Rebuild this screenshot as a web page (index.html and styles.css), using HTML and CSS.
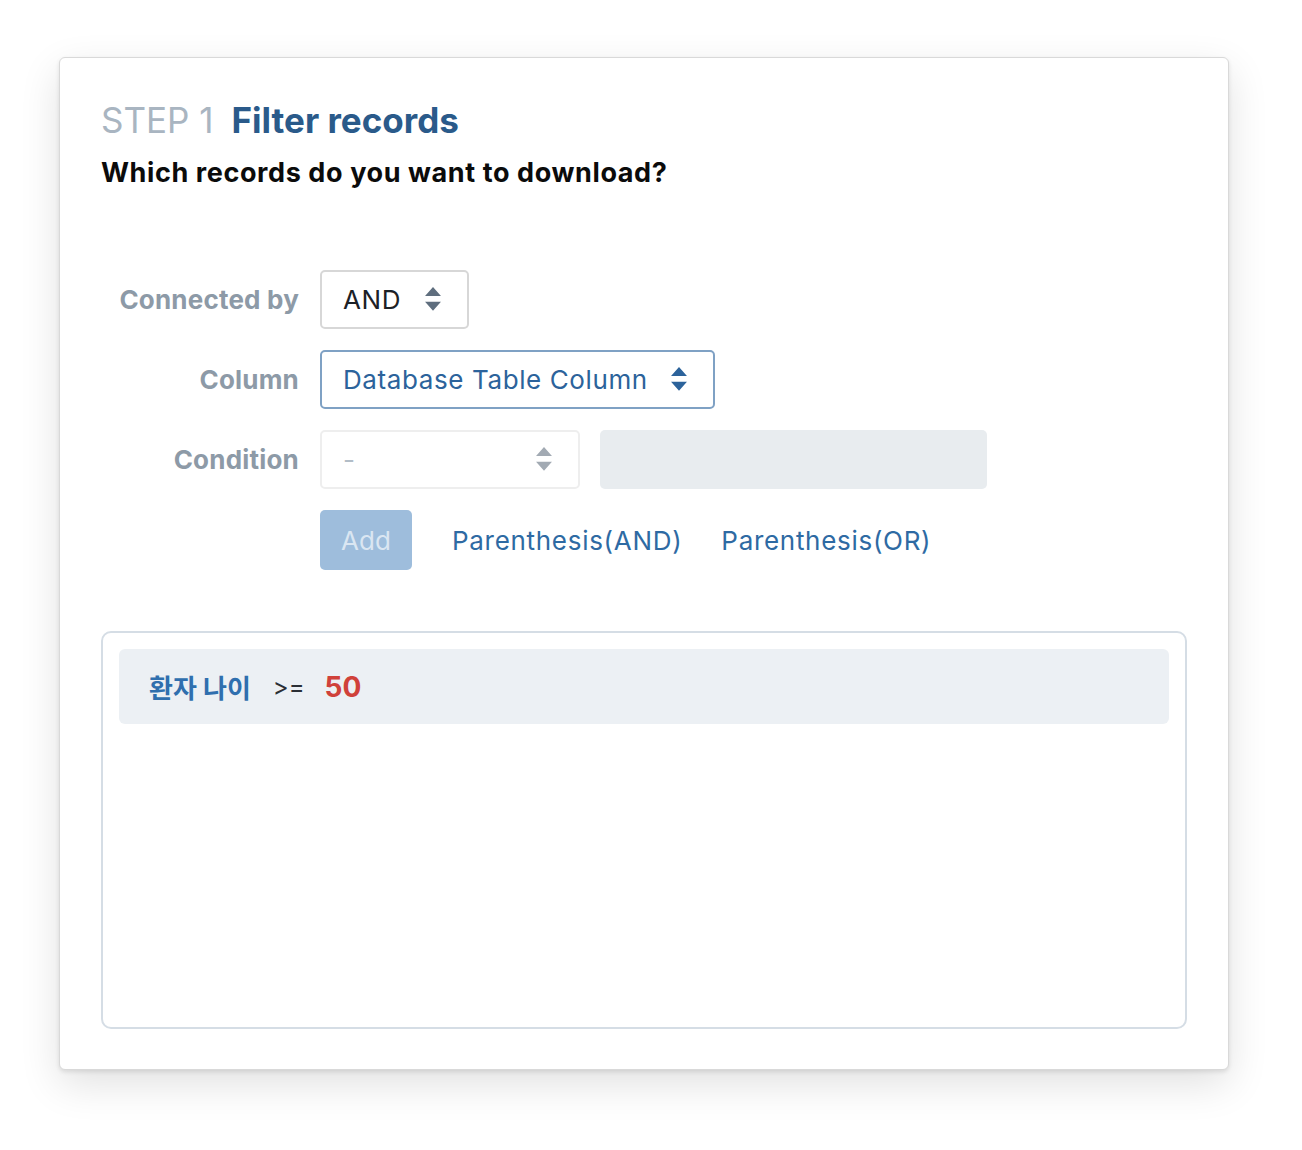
FILE: index.html
```html
<!DOCTYPE html>
<html>
<head>
<meta charset="utf-8">
<link rel="stylesheet" href="styles.css">
</head>
<body>
<div class="card">
  <h1 class="title"><span class="step">STEP 1</span><span class="name">Filter records</span></h1>
  <p class="subtitle">Which records do you want to download?</p>

  <div class="form">
    <div class="row">
      <div class="label">Connected by</div>
      <div class="select sel-and">
        <span class="val">AND</span>
        <svg class="arrows" viewBox="0 0 14 22" width="16" height="25"><path d="M7 0 L14 8 L0 8 Z M0 13 L14 13 L7 21 Z" fill="#5f6e7e"/></svg>
      </div>
    </div>
    <div class="row">
      <div class="label">Column</div>
      <div class="select sel-col">
        <span class="val">Database Table Column</span>
        <svg class="arrows" viewBox="0 0 14 22" width="16" height="25"><path d="M7 0 L14 8 L0 8 Z M0 13 L14 13 L7 21 Z" fill="#2c639b"/></svg>
      </div>
    </div>
    <div class="row">
      <div class="label">Condition</div>
      <div class="select sel-cond">
        <span class="val">-</span>
        <svg class="arrows" viewBox="0 0 14 22" width="16" height="25"><path d="M7 0 L14 8 L0 8 Z M0 13 L14 13 L7 21 Z" fill="#a2aab3"/></svg>
      </div>
      <div class="input-disabled"></div>
    </div>
    <div class="row actions">
      <div class="label"></div>
      <div class="btn-add">Add</div>
      <a class="link">Parenthesis(AND)</a>
      <a class="link link-or">Parenthesis(OR)</a>
    </div>
  </div>

  <div class="filters">
    <div class="filter-item">
      <span class="f-col">환자 나이</span>
      <span class="f-op">&gt;=</span>
      <span class="f-val">50</span>
    </div>
  </div>
</div>
</body>
</html>
```

FILE: styles.css
```css
html, body { margin: 0; padding: 0; background: #ffffff; }
body {
  font-family: Inter, "Noto Sans CJK KR", sans-serif;
  padding: 57px 72px 80px 59px;
}
.card {
  width: 1170px;
  height: 1013px;
  box-sizing: border-box;
  border: 1px solid #d9d9d9;
  border-radius: 6px;
  background: #fff;
  box-shadow: 0 14px 40px rgba(0,0,0,0.12), 0 2px 4px rgba(0,0,0,0.1);
  padding: 40px 41px 40px 41px;
}
.title {
  margin: 0;
  font-size: 35px;
  line-height: 44px;
  font-weight: 700;
  letter-spacing: 0;
}
.step { color: #a9b5c1; font-weight: 400; margin-right: 18px; }
.name { color: #2a5a8a; }
.subtitle {
  margin: 15px 0 0 0;
  font-size: 27px;
  line-height: 32px;
  font-weight: 700;
  color: #0b0b0b;
  letter-spacing: 0.6px;
}
.form {
  margin-top: 81px;
  display: flex;
  flex-direction: column;
  gap: 21px;
}
.row { display: flex; align-items: center; }
.label {
  width: 198px;
  text-align: right;
  padding-right: 21px;
  font-size: 26px;
  font-weight: 700;
  color: #8d9aa7;
  letter-spacing: 0.2px;
}
.select {
  height: 59px;
  box-sizing: border-box;
  border-radius: 5px;
  display: flex;
  align-items: center;
  justify-content: space-between;
  padding: 0 26px 0 21px;
  font-size: 26px;
  letter-spacing: 0.6px;
}
.sel-and { width: 149px; border: 2px solid #d7d7d7; color: #1c2126; }
.sel-col { width: 395px; border: 2px solid #7fa1c4; color: #2c639b; }
.sel-cond { width: 260px; border: 2px solid #eeeeee; color: #b2bdc7; }
.arrows { display: block; }
.input-disabled {
  margin-left: 20px;
  width: 387px;
  height: 59px;
  border-radius: 5px;
  background: #e8ecef;
}
.btn-add {
  width: 92px;
  height: 60px;
  border-radius: 5px;
  background: #9ebddc;
  color: #dae6f2;
  font-size: 26px;
  display: flex;
  align-items: center;
  justify-content: center;
}
.link {
  color: #2e6aa3;
  font-size: 26px;
  letter-spacing: 0.7px;
  margin-left: 40px;
}
.link-or { margin-left: 39px; }
.filters {
  margin-top: 61px;
  height: 398px;
  box-sizing: border-box;
  border: 2px solid #d5dde5;
  border-radius: 10px;
  padding: 16px;
}
.filter-item {
  height: 75px;
  background: #ecf0f4;
  border-radius: 6px;
  display: flex;
  align-items: center;
  padding-left: 30px;
}
.f-col { color: #2f6fae; font-weight: 700; font-size: 26px; }
.f-op { color: #2a2f35; font-size: 24px; margin-left: 22px; }
.f-val { color: #d0413a; font-weight: 700; font-size: 28px; margin-left: 20px; }
```
